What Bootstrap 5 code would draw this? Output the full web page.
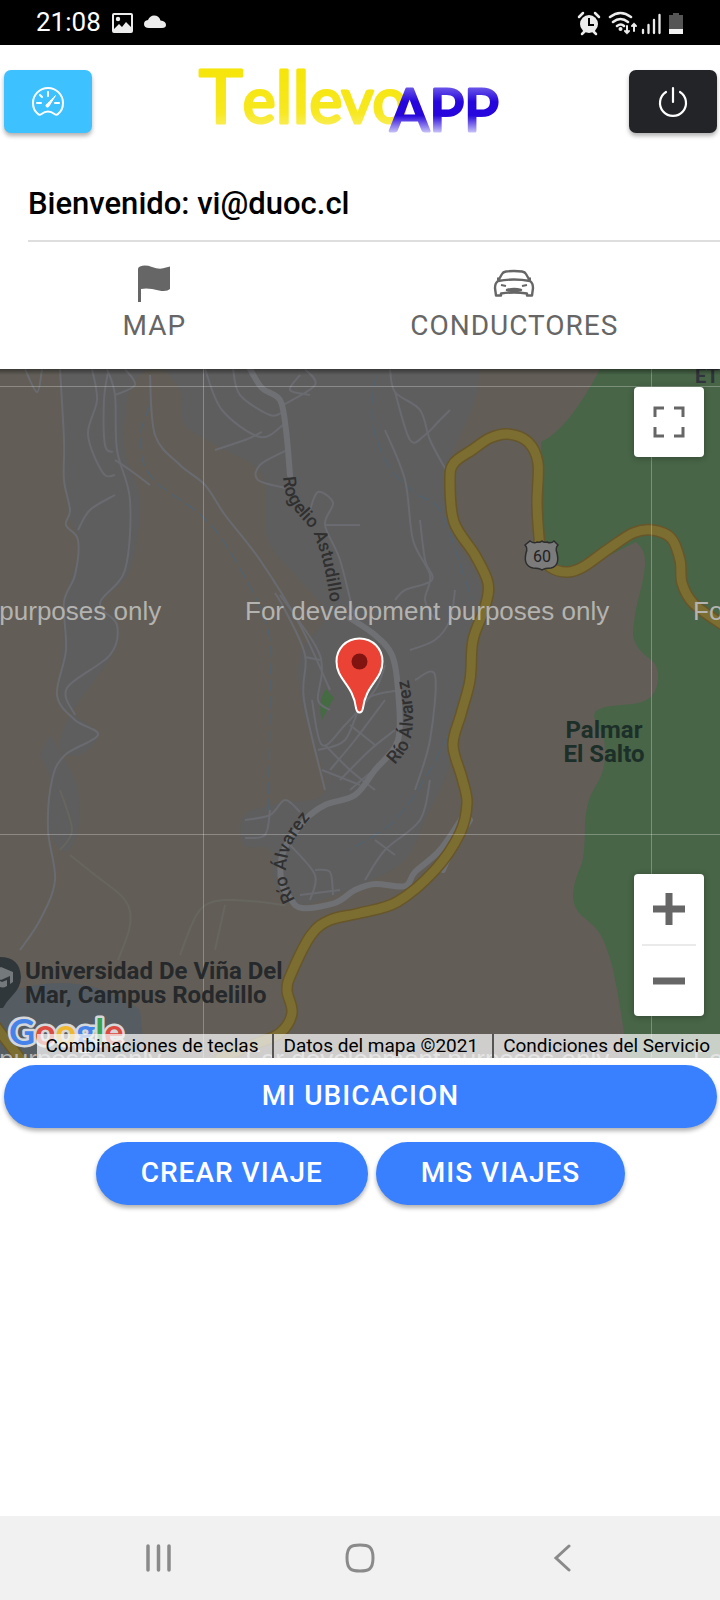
<!DOCTYPE html>
<html lang="es">
<head>
<meta charset="utf-8">
<meta name="viewport" content="width=device-width, initial-scale=1">
<title>TellevoAPP</title>
<link href="https://cdn.jsdelivr.net/npm/bootstrap@5.3.0/dist/css/bootstrap.min.css" rel="stylesheet">
<style>
  body { font-family: Roboto, "Liberation Sans", sans-serif; color: #000; background: #fff; }
  .status-bar { height: 45px; background: #000; color: #fff; font-size: 26px; padding: 0 35px 0 36px; }
  .app-bar { height: 113px; padding: 12px 3px 0 4px; }
  .tool-btn { width: 88px; height: 63px; margin-top: 13px; border: 0; border-radius: 7px; box-shadow: 0 3px 4px rgba(0,0,0,.3); }
  .tool-blue { background: #3dc2ff; }
  .tool-dark { background: #222428; }
  .brand-logo { width: 330px; height: 84px; font-family: Lato, sans-serif; }
  .welcome { margin-left: 28px; height: 84px; border-bottom: 2px solid #dedede; font-size: 31px; font-weight: 500; padding-top: 24px; line-height: 44px; }
  .tabs-grid { display: grid; grid-template-columns: 3fr 4fr; height: 127px; }
  .tab-item { border: 0; background: none; color: #666; font-size: 28px; letter-spacing: 1px; line-height: 32px; padding: 22px 0 0; display: flex; flex-direction: column; align-items: center; gap: 6px; }
  .map-box { height: 689px; background: #625e57; }
  .map-box > svg { width: 100%; height: 100%; display: block; }
  .map-ctl { right: 16px; background: #fff; border-radius: 4px; box-shadow: 0 1px 6px rgba(0,0,0,.3); width: 70px; }
  .map-ctl button { border: 0; background: none; padding: 0; width: 70px; height: 70px; display: flex; align-items: center; justify-content: center; }
  .ctl-full { top: 18px; }
  .ctl-zoom { bottom: 42px; }
  .ctl-zoom hr { margin: 0 8px; border-color: #aaa; border-width: 2px; }
  .credits { right: 0; bottom: 0; height: 24px; background: rgba(245,245,245,.74); font-size: 19px; line-height: 24px; white-space: nowrap; }
  .credits a { color: #000; text-decoration: none; padding: 0 14px 0 9px; border-left: 2px solid #555; }
  .credits a:first-child { border-left: 0; }
  .credits a:last-child { padding-right: 10px; }
  .pill-btn { height: 63px; border: 0; border-radius: 32px; background: #3880ff; color: #fff; font-size: 28px; font-weight: 500; letter-spacing: 1px; line-height: 32px; padding: 0 45px 2px; box-shadow: 0 3px 4px rgba(0,0,0,.3); }
  .actions { padding: 7px 3px 0 4px; }
  .trip-row { padding-top: 14px; }
  .sys-nav { height: 84px; background: #f1f1f1; padding: 0 57px; }
  .sys-nav button { border: 0; background: none; flex: 1; padding: 0; }
  .wm { font: 26px "Liberation Sans", sans-serif; fill: #b4b3b0; }
  .place { font: 700 24px Roboto, sans-serif; }
  .street-name { font: 500 18px Roboto, sans-serif; fill: #303030; }
</style>
</head>
<body class="d-flex flex-column min-vh-100">

<div class="status-bar d-flex align-items-center">
  <span>21:08</span>
  <svg class="ms-2" width="62" height="26" viewBox="0 0 62 26" fill="#ececec" aria-hidden="true">
    <path fill-rule="evenodd" d="M5 3h17q2 0 2 2v16q0 2-2 2H5q-2 0-2-2V5q0-2 2-2zM5 5v14l5-5 3 3 4-5 5 5V5z"/><circle cx="9" cy="9" r="2.200"/>
    <path d="M40 18q-5 0-5-4 0-3.500 4-4 2-4.500 6-4.500 5 0 6.500 5 5.500.5 5.500 4.500 0 3-4 3z"/>
  </svg>
  <svg class="ms-auto" width="108" height="28" viewBox="0 0 108 28" aria-hidden="true">
    <g fill="#ececec" stroke="#ececec">
      <circle cx="12" cy="15" r="9" stroke="none"/>
      <path d="M2 8l4-4M22 8l-4-4M5 25l3-3M19 25l-3-3" stroke-width="2.500" stroke-linecap="round"/>
      <path d="M12 9v7h5" fill="none" stroke="#000" stroke-width="2"/>
    </g>
    <g fill="none" stroke="#ececec" stroke-width="2.500" stroke-linecap="round">
      <path d="M33 8q10.500-8 21 0M36 13q7.500-6 15 0M40 17q4-3 7 0"/>
      <path d="M50 17v7M48 22l2 2 2-2M57 22v-7M55 17l2-2 2 2" stroke-width="2"/>
      <path d="M66 24v-3M71.500 24v-8M77 24V11M82.500 24V6" stroke-width="2.300"/>
    </g>
    <circle cx="43.500" cy="20" r="2" fill="#ececec"/>
    <path d="M96 4h6v2h4v18H92V6h4z" fill="#555"/><path d="M92 20h14v5H92z" fill="#f2f2f2"/>
  </svg>
</div>

<header>
  <div class="app-bar d-flex justify-content-between align-items-start">
    <button class="tool-btn tool-blue" type="button" aria-label="Panel">
      <svg width="34" height="32" viewBox="0 0 34 32" fill="none" stroke="#fff" stroke-width="2" stroke-linecap="round" stroke-linejoin="round">
        <path d="M7 28q-5-4-5-11a15 15 0 0 1 30 0q0 7-5 11-1.500 1.500-3.500 0-6.500-5-13 0-2 1.500-3.500 0z"/>
        <path d="M17 6v4M9 9l2 2M6 17h4M24 17h4"/><path d="M16 18l8.500-8.500-6.500 10.500a1.600 1.600 0 1 1-2-2z" fill="#fff" stroke-width="1"/>
      </svg>
    </button>
    <svg class="brand-logo" viewBox="0 0 330 84" role="img" aria-label="TellevoAPP">
      <defs>
        <linearGradient id="gy" x1="0" y1="0" x2="0" y2="1"><stop offset="0" stop-color="#f5e400"/><stop offset=".7" stop-color="#f7e820"/><stop offset="1" stop-color="#fbf28a"/></linearGradient>
        <linearGradient id="gb" x1="0" y1="0" x2="0" y2="1"><stop offset=".1" stop-color="#8a7bee"/><stop offset=".4" stop-color="#2606dc"/><stop offset=".6" stop-color="#2606dc"/><stop offset=".85" stop-color="#c9c4f8"/></linearGradient>
      </defs>
      <text x="3" y="66" fill="url(#gy)" stroke="url(#gy)" stroke-width="3" stroke-linejoin="round" font-size="62"><tspan font-size="74">T</tspan>e<tspan font-size="72">ll</tspan>evo</text>
      <text x="194" y="74" fill="url(#gb)" stroke="url(#gb)" stroke-width="3" stroke-linejoin="round" font-size="58">APP</text>
    </svg>
    <button class="tool-btn tool-dark" type="button" aria-label="Salir">
      <svg width="32" height="32" viewBox="0 0 32 32" fill="none" stroke="#fff" stroke-width="2.200" stroke-linecap="round"><path d="M9 6a13 13 0 1 0 14 0M16 2v14"/></svg>
    </button>
  </div>
  <div class="welcome">Bienvenido: vi@duoc.cl</div>
  <nav class="tabs-grid">
    <button class="tab-item" type="button">
      <svg width="36" height="40" viewBox="0 0 36 40" fill="#666"><path d="M2 5q0-2 2-2.500 5-2 12 .5 8 3 14 .5l4-1V25q-3 3-11 1.500-11-3-18-1.500v13H2z"/></svg>
      <span>MAP</span>
    </button>
    <button class="tab-item" type="button">
      <svg width="42" height="40" viewBox="0 0 42 40" fill="none" stroke="#666" stroke-width="2.400" stroke-linejoin="round">
        <path d="M5 17l4-7q1-2 4-2.500 8-1 16 0 3 .5 4 2.500l4 7q3 2 3 7l-1 7.500h-5v-2q-13-2-26 0v2H3L2 24q0-5 3-7zM5 17q16-3 32 0"/>
        <path d="M7 15H4M35 15h3" stroke-width="3"/>
        <path d="M8 21l5 1M34 21l-5 1" stroke-width="2"/><path d="M14 26q7-2 14 0-7 2-14 0z" fill="#666"/>
      </svg>
      <span>CONDUCTORES</span>
    </button>
  </nav>
</header>

<main class="flex-grow-1">
  <section class="map-box position-relative overflow-hidden" aria-label="Mapa">
    <svg viewBox="0 369 720 689" preserveAspectRatio="xMidYMid slice">
      <defs><linearGradient id="topShade" x1="0" y1="0" x2="0" y2="1"><stop offset="0" stop-color="#000" stop-opacity=".4"/><stop offset="1" stop-color="#000" stop-opacity="0"/></linearGradient></defs>
      <g fill="#5e5e5e">
        <path data-area data-pts="62,360 63,440 64,480 70,520 80,545 65,600 63,640 60,700 75,715 98,735 80,755 60,750 65,725 80,700 115,650 117,625 102,603 130,570 140,500 125,450 130,390 160,360"/>
        <path data-area data-pts="150,355 180,390 185,425 225,450 262,475 268,540 300,580 325,615 300,655 303,710 325,790 280,803 244,815 244,845 270,850 275,885 300,905 360,885 405,860 425,820 448,770 455,720 468,680 480,620 484,590 450,525 447,470 475,400 480,355"/>
        <path data-area data-pts="50,735 65,760 78,790 78,830 65,852 50,830 50,780 40,755"/>
      </g>
      <path d="M0 995q80-30 140 15l5 48H0z" fill="#555c62"/>
      <path d="M600 369Q568 430 541 442L541 550Q565 580 600 560L636 542Q646 550 645 565C643 590 635 600 633 635C638 660 658 655 658 675C658 710 630 702 605 707C590 712 592 715 603 735Q610 765 595 787C580 810 588 840 582 863C570 890 570 905 582 916C600 930 603 935 612 965Q622 1010 627 1058H720V369z" fill="#486547"/>
      <path d="M326 689l8 9-6 10-6 12q-5-18 4-31z" fill="#456b43"/>

      <g fill="none" stroke="#53626d" stroke-width="1.500" stroke-dasharray="12 5">
        <path data-pts="150,405 140,440 152,478 203,517 235,560 268,630 270,700 268,830"/>
        <path data-pts="376,375 372,420 388,465 415,493 440,510 462,570 472,600"/>
        <path data-pts="455,720 430,770 395,820 350,850"/>
      </g>
      <g fill="none" stroke="#6a6b70" stroke-width="2">
        <path data-pts="60,369 64,440 64,480 70,510 66,525 78,540 75,575 64,602 66,650 57,695 75,720 98,735 65,755 52,780 48,830 55,880 40,920 20,950"/>
        <path data-pts="107,369 115,395 117,450 130,500 125,570 100,603 117,625 110,655 67,688 75,715"/>
        <path data-pts="92,369 97,400 88,435 103,473 115,475"/>
        <path data-pts="108,372 104,400 105,445 113,452"/>
        <path data-pts="25,369 37,392 42,369"/>
        <path data-pts="115,460 130,470 150,485"/>
        <path data-pts="115,395 135,385 125,369"/>
        <path data-pts="115,495 90,510 78,530"/>
        <path data-pts="150,375 155,435 180,465 205,485 225,515 260,560 300,625 330,690"/>
        <path data-pts="205,369 222,410 260,437 283,425"/>
        <path data-pts="233,369 240,395 270,415 283,412"/>
        <path data-pts="283,405 315,385 305,369"/>
        <path data-pts="287,450 260,465 258,480 285,488"/>
        <path data-pts="300,375 290,390 310,395"/>
        <path data-pts="215,450 245,440 262,432"/>
        <path data-pts="310,510 318,492 333,503 325,525 340,560 355,620"/>
        <path data-pts="325,525 360,525"/>
        <path data-pts="275,593 285,610 305,655 304,700 325,790"/>
        <path data-pts="280,595 315,645 322,670 318,700 330,710"/>
        <path data-pts="305,657 320,660"/><path data-pts="312,700 322,745 345,725 375,690 385,665"/>
        <path data-pts="390,369 395,392 420,410 430,440 446,470"/>
        <path data-pts="395,392 410,440 425,435 440,420 450,410"/>
        <path data-pts="385,430 405,480 413,540 430,575 425,600 435,620"/>
        <path data-pts="420,520 425,560 432,580 405,590 395,600"/>
        <path data-pts="410,650 435,640 450,620 455,590"/>
        <path data-pts="318,750 345,740 365,700 400,690"/>
        <path data-pts="330,770 355,740 385,700"/><path data-pts="340,780 370,750 395,730"/>
        <path data-pts="350,790 380,765 410,745"/><path data-pts="322,770 360,785"/>
        <path data-pts="325,745 350,770 375,790"/><path data-pts="350,725 375,745"/><path data-pts="415,680 435,675 430,740 415,790"/>
        <path data-pts="245,820 270,815 285,800 300,812"/><path data-pts="245,838 265,835 270,810"/>
        <path data-pts="290,845 315,875 310,900"/><path data-pts="315,870 330,872 333,895"/><path data-pts="300,895 340,890"/>
        <path data-pts="365,880 385,850 420,820 430,780"/><path data-pts="375,840 395,855"/>
      </g>
      <g fill="none" stroke="#67655f" stroke-width="2">
        <path data-pts="70,855 95,875 125,900 130,925 118,960"/>
        <path data-pts="180,955 200,910 230,900 285,905"/><path data-pts="225,905 215,950"/><path data-pts="60,790 72,830 60,850"/>
      </g>
      <g fill="none" stroke="#6f7074" stroke-width="6" stroke-linecap="round">
        <path data-pts="250,369 262,388 280,400 286,430 290,475"/>
        <path data-pts="350,618 375,635 392,655 398,690 398,740 375,770 355,795 325,805 305,820 284,850 281,880 290,898 302,908 335,903 355,890 375,884 405,886 415,872 440,850 464,815"/>
        <path data-pts="443,870 452,850 470,820"/>
      </g>
      <g fill="none" stroke-linecap="round">
        <g stroke="#67562a" stroke-width="12">
          <path data-pts="730,628 720,623 693,603 682,583 680,560 671,538 652,530 633,533 607,550 583,567 567,572 550,567 541,553 539,537 537,503 538,463 528,442 508,434 490,438 472,450 454,463 450,480 454,522 475,555 488,583 485,607 473,640 470,680 461,714 453,745 462,778 467,803 460,833 435,870 397,902 360,913 330,920 311,935 292,972 287,990 292,1013 280,1033 255,1044 220,1058"/>
          <path data-pts="-10,1018 0,1032 25,1065"/>
        </g>
        <g stroke="#7c6e31" stroke-width="9">
          <path data-pts="730,628 720,623 693,603 682,583 680,560 671,538 652,530 633,533 607,550 583,567 567,572 550,567 541,553 539,537 537,503 538,463 528,442 508,434 490,438 472,450 454,463 450,480 454,522 475,555 488,583 485,607 473,640 470,680 461,714 453,745 462,778 467,803 460,833 435,870 397,902 360,913 330,920 311,935 292,972 287,990 292,1013 280,1033 255,1044 220,1058"/>
          <path data-pts="-10,1018 0,1032 25,1065"/>
        </g>
      </g>

      <path d="M203.500 369v689M651.500 369v689M0 386.500h720M0 834.500h720" stroke="#fff" stroke-opacity=".28"/>

      <path d="M530 541q4 3 7 1 3 1 5-1 2 2 5 1 4 2 7-1l4 4q-3 3-1 8 3 13-6 15-6 0-9 2-3-2-9-2-10-2-7-15 2-5-1-8z" fill="#7b7b7b" stroke="#2d2d2d" stroke-width="1.500"/>
      <text x="542" y="562" text-anchor="middle" font-family="Roboto, sans-serif" font-size="16" fill="#222">60</text>

      <defs>
        <path id="l1" data-pts="283,477 286,494 297,513 311,529 317,543 323,562 330,600 332,620"/>
        <path id="l2" data-pts="395,765 408,747 413,720 411,695 405,660"/>
        <path id="l3" data-pts="295,900 287,880 287,860 293,842 306,823 318,810"/>
      </defs>
      <g class="street-name">
        <text><textPath href="#l1">Rogelio Astudillo</textPath></text>
        <text><textPath href="#l2">Río Álvarez</textPath></text>
        <text><textPath href="#l3">Río Álvarez</textPath></text>
      </g>

      <g class="place">
        <g fill="#1d2f29" text-anchor="middle"><text x="604" y="738">Palmar</text><text x="604" y="762">El Salto</text></g>
        <g fill="#26292b"><text x="25" y="979">Universidad De Viña Del</text><text x="25" y="1003">Mar, Campus Rodelillo</text></g>
        <text x="695" y="383" fill="#30343c" font-size="20">ET</text>
      </g>
      <path d="M0 957q20 0 21 20 0 10-9 19-6 6-9 12H0z" fill="#30373a"/>
      <path d="M-8 972l9-5 12 5v10l-3 2v-8l-9 4-9-5zM-2 980v6q4 3 9 0v-6l-5 2z" fill="#74797b"/>

      <g class="wm">
        <text x="-203" y="620">For development purposes only</text><text x="245" y="620">For development purposes only</text><text x="693" y="620">For development purposes only</text>
        <text x="-203" y="1068">For development purposes only</text><text x="245" y="1068">For development purposes only</text><text x="693" y="1068">For development purposes only</text>
      </g>
      <rect y="369" width="720" height="6" fill="url(#topShade)"/>

      <path d="M359.500 638.500C346 638.500 336.500 649 336.500 661.500C336.500 680 353 684 356 708Q357 712.500 359.500 712.500T363 708C366 684 382.500 680 382.500 661.500C382.500 649 373 638.500 359.500 638.500z" fill="#ea4335" stroke="#fff" stroke-width="2"/>
      <circle cx="359.500" cy="661.500" r="8" fill="#811411"/>

      <text x="9" y="1045" font-family="Lato, sans-serif" font-size="36" font-weight="700" stroke="#d5d7d8" stroke-width="5" paint-order="stroke" stroke-linejoin="round"><tspan fill="#4583ea">G</tspan><tspan fill="#dc4a40">o</tspan><tspan fill="#efb82c">o</tspan><tspan fill="#4583ea">g</tspan><tspan fill="#35a350">l</tspan><tspan fill="#dc4a40">e</tspan></text>
    </svg>

    <div class="map-ctl ctl-full position-absolute">
      <button type="button" aria-label="Pantalla completa"><svg width="32" height="32" viewBox="0 0 32 32" fill="none" stroke="#666" stroke-width="3"><path d="M2 11V2h9M21 2h9v9M30 21v9h-9M11 30H2v-9"/></svg></button>
    </div>
    <div class="map-ctl ctl-zoom position-absolute">
      <button type="button" aria-label="Acercar"><svg width="32" height="32" viewBox="0 0 32 32" stroke="#666" stroke-width="7"><path d="M16 0v32M0 16h32"/></svg></button>
      <hr>
      <button type="button" aria-label="Alejar"><svg width="32" height="32" viewBox="0 0 32 32" stroke="#666" stroke-width="7"><path d="M0 16h32"/></svg></button>
    </div>
    <div class="credits d-flex position-absolute">
      <a href="#">Combinaciones de teclas</a><a href="#">Datos del mapa ©2021</a><a href="#">Condiciones del Servicio</a>
    </div>
  </section>

  <section class="actions">
    <button class="pill-btn w-100 d-block" type="button">MI UBICACION</button>
    <div class="trip-row d-flex justify-content-center gap-2">
      <button class="pill-btn" type="button">CREAR VIAJE</button>
      <button class="pill-btn" type="button">MIS VIAJES</button>
    </div>
  </section>
</main>

<footer class="sys-nav d-flex align-items-center">
  <button type="button" aria-label="Recientes"><svg width="28" height="30" viewBox="0 0 28 30" stroke="#8a8a8a" stroke-width="3.500" stroke-linecap="round"><path d="M4 3v24M14.500 3v24M25 3v24"/></svg></button>
  <button type="button" aria-label="Inicio"><svg width="30" height="30" viewBox="0 0 30 30" fill="none" stroke="#8a8a8a" stroke-width="3"><path d="M15 2C23 2 28 3 28 15S23 28 15 28 2 27 2 15 7 2 15 2z"/></svg></button>
  <button type="button" aria-label="Atrás"><svg width="18" height="30" viewBox="0 0 18 30" fill="none" stroke="#8a8a8a" stroke-width="3" stroke-linecap="round"><path d="M16 3L3 15l13 12"/></svg></button>
</footer>

<script src="https://cdn.jsdelivr.net/npm/bootstrap@5.3.0/dist/js/bootstrap.bundle.min.js"></script>
<script>
  // Turns each list of map points into a smooth curve through them.
  document.querySelectorAll('[data-pts]').forEach(function (el) {
    var p = el.dataset.pts.split(' ').map(function (s) { return s.split(',').map(Number); });
    var d = 'M' + p[0];
    for (var i = 0; i < p.length - 1; i++) {
      var a = p[i - 1] || p[i], b = p[i], c = p[i + 1], e = p[i + 2] || c;
      d += 'C' + [b[0] + (c[0] - a[0]) / 6, b[1] + (c[1] - a[1]) / 6,
                  c[0] - (e[0] - b[0]) / 6, c[1] - (e[1] - b[1]) / 6, c[0], c[1]];
    }
    el.setAttribute('d', d + (el.hasAttribute('data-area') ? 'Z' : ''));
  });
</script>
</body>
</html>
